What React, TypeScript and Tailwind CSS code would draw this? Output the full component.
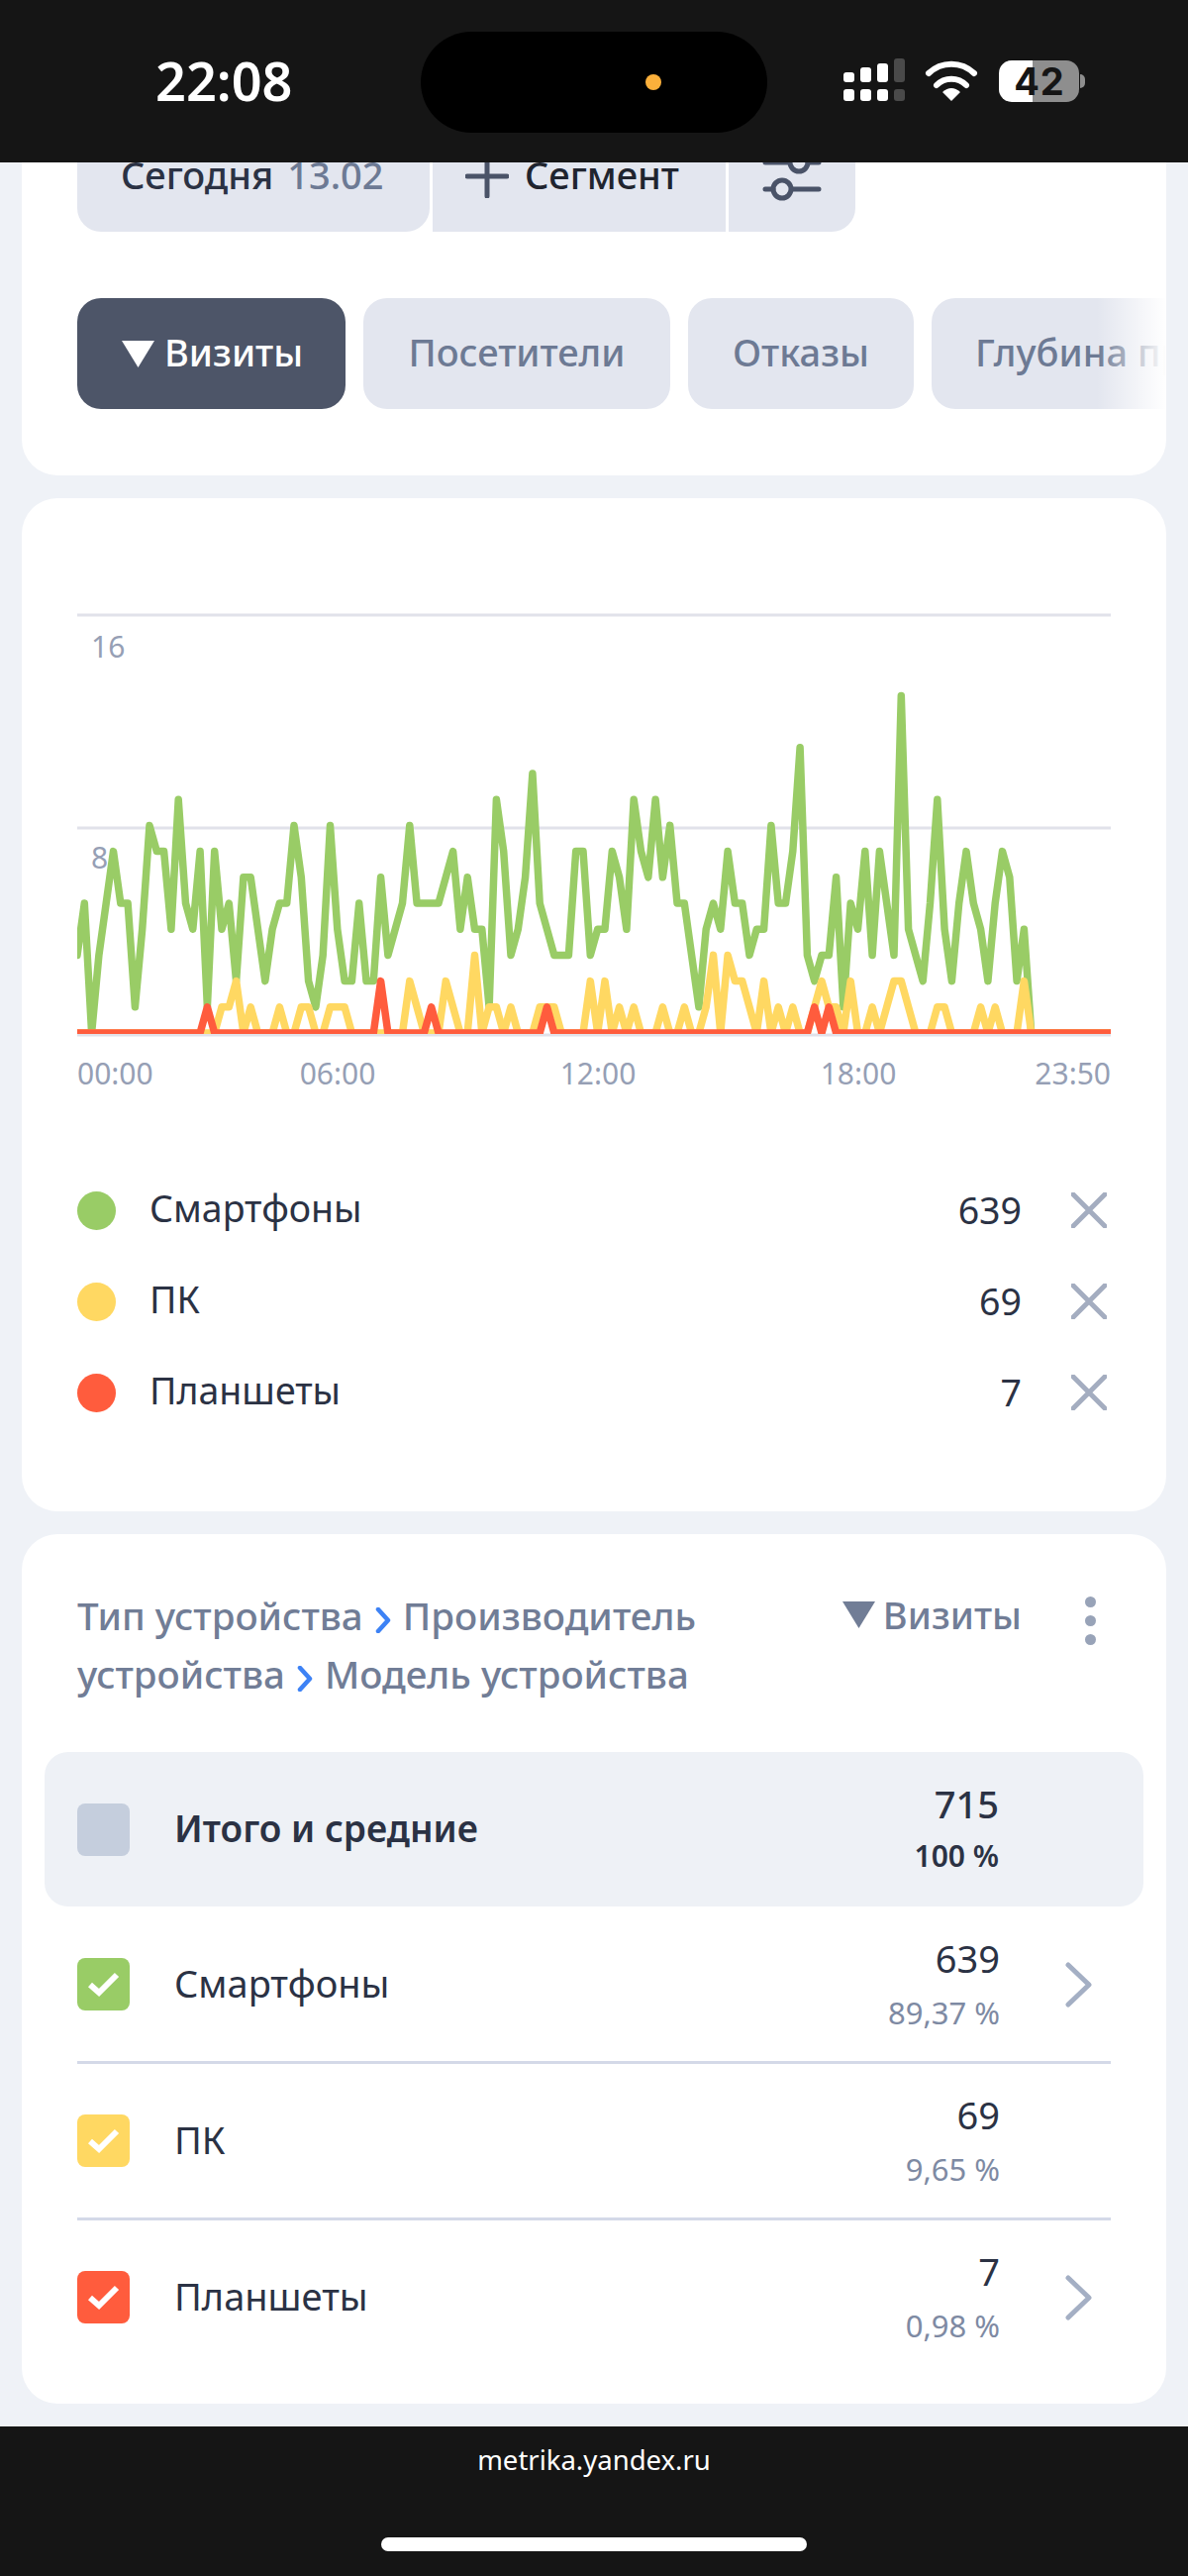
const green = [3,5,0,3,5,7,5,5,1,4,8,7,7,4,9,5,4,7,1,7,4,5,2,6,6,4,2,4,5,5,8,6,2,1,3,8,4,2,2,5,2,2,6,3,4,5,8,5,5,5,5,6,7,4,6,4,4,1,9,7,3,4,6,10,5,4,3,3,3,7,7,3,4,4,7,6,4,9,7,6,9,6,8,5,5,3,1,4,5,4,7,5,5,3,4,4,8,5,5,7,11,3,2,3,3,6,1,5,4,7,3,7,5,3,13,4,3,2,5,9,4,2,5,7,5,4,2,5,7,6,2,4,0];
const yellowPeaks: Record<number, number> = {20:1,21:1,22:2,24:1,28:1,31:1,32:1,35:1,36:1,37:1,46:2,47:1,51:2,52:1,55:3,57:1,58:1,60:1,64:1,65:1,66:1,71:2,73:2,75:1,77:1,81:1,84:1,87:1,88:3,90:3,91:2,92:2,93:1,95:2,97:1,99:1,102:1,103:2,104:1,105:1,107:2,110:1,112:1,113:2,114:2,115:1,119:1,120:1,125:1,127:1,131:2};
const redPeaks: Record<number, number> = {18:1,42:2,49:1,65:1,102:1,104:1};

const POINTS = 144;
const STEP = 1044 / 143;
const ZERO = 440;
const UNIT = 26.2;

function toPoints(value: (i: number) => number) {
  const out: string[] = [];
  for (let i = 0; i < POINTS; i++) {
    out.push(`${(i * STEP).toFixed(1)},${(ZERO - value(i) * UNIT).toFixed(1)}`);
  }
  return out.join(" ");
}

function Chart() {
  const labels = [
    { t: "06:00", x: 263 },
    { t: "12:00", x: 526 },
    { t: "18:00", x: 789 },
  ];
  return (
    <svg width="1044" height="507" viewBox="0 0 1044 507" className="block overflow-hidden">
      <defs>
        <clipPath id="plot">
          <rect x="0" y="0" width="1044" height="441" />
        </clipPath>
      </defs>
      <g stroke="#e1e2ea" strokeWidth="3">
        <line x1="0" x2="1044" y1="18" y2="18" />
        <line x1="0" x2="1044" y1="233" y2="233" />
        <line x1="0" x2="1044" y1="442" y2="442" />
      </g>
      <g fill="#969fb5" fontSize="30" fontFamily="'Noto Sans', sans-serif">
        <text x="14" y="61">16</text>
        <text x="14" y="274">8</text>
        <text x="0" y="492">00:00</text>
        {labels.map((l) => (
          <text key={l.t} x={l.x} y="492" textAnchor="middle">{l.t}</text>
        ))}
        <text x="1044" y="492" textAnchor="end">23:50</text>
      </g>
      <g clipPath="url(#plot)" fill="none" strokeWidth="7.5" strokeLinejoin="round" strokeLinecap="round">
        <polyline stroke="#99cc66" points={toPoints((i) => green[i] ?? 0)} />
        <polyline stroke="#ffd862" points={toPoints((i) => yellowPeaks[i] ?? 0)} />
        <polyline stroke="#ff5c3d" points={toPoints((i) => redPeaks[i] ?? 0)} />
      </g>
    </svg>
  );
}

function StatusBar() {
  const bars = [
    { top: "h-[10px]", color: "bg-white" },
    { top: "h-[15px]", color: "bg-white" },
    { top: "h-[19px]", color: "bg-white" },
    { top: "h-[24px]", color: "bg-[#4a4a4a]" },
  ];
  return (
    <div className="relative h-[164px] shrink-0 bg-[#151515] z-10 flex items-center">
      <div className="w-[425px] pl-[157px] text-[54px] leading-none font-semibold text-white mt-[-2px]">22:08</div>
      <div className="w-[350px] h-[102px] rounded-full bg-black flex items-center justify-end pr-[107px] mt-[2px]">
        <div className="w-4 h-4 rounded-full bg-[#fbb03b]" />
      </div>
      <div className="flex gap-[6px] ml-[77px] mt-[-4px]">
        {bars.map((b, i) => (
          <div key={i} className="w-[11px] flex flex-col gap-[7px] h-[43px] justify-end">
            <div className={`${b.color} rounded-[3px] ${b.top}`} />
            <div className={`${b.color} rounded-[3px] h-[12px]`} />
          </div>
        ))}
      </div>
      <svg width="54" height="42" viewBox="0 0 54 42" className="ml-[20px] mt-[-1px]">
        <path d="M4 13A33 33 0 0 1 50 13" fill="none" stroke="#fff" strokeWidth="6" strokeLinecap="round" />
        <path d="M12 25A21 21 0 0 1 42 25" fill="none" stroke="#fff" strokeWidth="6" strokeLinecap="round" />
        <path d="M18 32Q27 24 36 32L27 41Z" fill="#fff" />
      </svg>
      <div className="ml-[21px] w-[81px] h-[42px] rounded-[13px] bg-[linear-gradient(90deg,#fff_42%,#8e8e8e_42%)] flex items-center justify-center mt-[-1px] pl-[1px] text-[38px] font-bold text-[#151515] font-['Inter',sans-serif] tracking-[1px] leading-none">42</div>
      <div className="w-[5px] h-[14px] ml-[1px] rounded-r-full bg-[#8e8e8e] mt-[-1px]" />
    </div>
  );
}

function Triangle({ color }: { color: string }) {
  return (
    <svg width="33" height="27" viewBox="0 0 33 27" className="shrink-0">
      <path d="M0 0H33L16.5 27Z" fill={color} />
    </svg>
  );
}

function FilterBar() {
  return (
    <div className="flex gap-[3px] w-[786px] h-[112px] -mt-[42px] text-[38px] font-medium">
      <div className="w-[356px] bg-[#e3e6ef] rounded-b-[24px] flex items-center pl-[44px] gap-[14px]">
        <span className="text-[#2b3244] mb-[4px]">Сегодня</span>
        <span className="text-[#6d7a94] mb-[4px]">13.02</span>
      </div>
      <div className="w-[296px] bg-[#e3e6ef] flex items-center pl-[33px] gap-[16px]">
        <svg width="44" height="44" viewBox="0 0 44 44" fill="none" stroke="#4a5368" strokeWidth="5" strokeLinecap="round">
          <path d="M2 22H42M22 2V42" />
        </svg>
        <span className="text-[#20242f] mb-[4px]">Сегмент</span>
      </div>
      <div className="flex-1 bg-[#e3e6ef] rounded-br-[24px] flex items-center justify-center">
        <svg width="60" height="52" viewBox="0 0 60 52" fill="none" stroke="#4a5368" strokeWidth="5" strokeLinecap="round">
          <path d="M3 12H27M46 12H57M3 39H11M30 39H57" />
          <circle cx="37" cy="12" r="9" />
          <circle cx="20" cy="39" r="9" />
        </svg>
      </div>
    </div>
  );
}

function Tabs() {
  return (
    <div className="relative mt-[67px] -mr-[55px] overflow-hidden">
      <div className="flex gap-[18px] h-[112px] text-[38px] font-medium text-[#6d7a94] whitespace-nowrap">
        <div className="w-[271px] shrink-0 rounded-[24px] bg-[#4d5568] text-white flex items-center pl-[45px] gap-[10px]">
          <Triangle color="#fff" />
          <span className="mb-[3px]">Визиты</span>
        </div>
        <div className="w-[310px] shrink-0 rounded-[24px] bg-[#e3e6ef] flex items-center justify-center pb-[3px]">Посетители</div>
        <div className="w-[228px] shrink-0 rounded-[24px] bg-[#e3e6ef] flex items-center justify-center pb-[3px]">Отказы</div>
        <div className="w-[420px] shrink-0 rounded-[24px] bg-[#e3e6ef] flex items-center pl-[44px] pb-[3px]">Глубина просмотра</div>
      </div>
      <div className="absolute top-0 bottom-0 right-0 w-[70px] bg-linear-to-r from-transparent to-white" />
    </div>
  );
}

function LegendRow({ color, label, value }: { color: string; label: string; value: number }) {
  return (
    <div className="h-[92px] flex items-center text-[37.5px] text-[#2b3244]">
      <div className={`w-[39px] h-[39px] rounded-full ${color}`} />
      <div className="ml-[34px] flex-1 mb-[3px]">{label}</div>
      <div>{value}</div>
      <svg width="36" height="36" viewBox="0 0 36 36" className="ml-[50px] mr-[4px]" stroke="#a4adc0" strokeWidth="5" strokeLinecap="round">
        <path d="M2 2L34 34M34 2L2 34" />
      </svg>
    </div>
  );
}

function Crumb() {
  return (
    <svg width="16" height="26" viewBox="0 0 16 26" className="inline-block mx-[12px] align-[-3px]" fill="none" stroke="#3d82f5" strokeWidth="4.5" strokeLinecap="round" strokeLinejoin="round">
      <path d="M3 2L13 13L3 24" />
    </svg>
  );
}

function CheckBox({ color }: { color: string }) {
  return (
    <div className={`w-[53px] h-[53px] shrink-0 rounded-[8px] flex items-center justify-center ${color}`}>
      <svg width="32" height="26" viewBox="0 0 32 26" fill="none" stroke="#fff" strokeWidth="6">
        <path d="M2 13L11 21L29 3" />
      </svg>
    </div>
  );
}

function DeviceRow(props: { color: string; label: string; value: number; pct: string; chevron: boolean; last?: boolean }) {
  return (
    <div className={`h-[158px] flex items-center border-b-[3px] ${props.last ? "border-transparent" : "border-[#d4d9e8]"}`}>
      <CheckBox color={props.color} />
      <div className="ml-[45px] flex-1 text-[38px] text-[#2b3244] mb-[3px]">{props.label}</div>
      <div className="text-right pt-[1px]">
        <div className="text-[38px] leading-[52px] text-[#2b3244]">{props.value}</div>
        <div className="text-[31px] leading-[52px] mt-[3px] text-[#7e8aa3]">{props.pct}</div>
      </div>
      <div className="w-[112px] flex justify-end pr-[18px]">
        {props.chevron && (
          <svg width="28" height="46" viewBox="0 0 28 46" fill="none" stroke="#a4afc4" strokeWidth="5" strokeLinecap="round" strokeLinejoin="round">
            <path d="M3 3L24 23L3 43" />
          </svg>
        )}
      </div>
    </div>
  );
}

export default function App() {
  return (
    <div className="w-[1200px] h-[2601px] flex flex-col bg-[#eff2f7] font-['Noto_Sans',sans-serif] overflow-hidden">
      <StatusBar />
      <main className="flex-1 overflow-hidden px-[22px] flex flex-col gap-[23px]">
        <section className="bg-white rounded-b-[36px] pl-[56px] pr-[55px] pb-[67px]">
          <FilterBar />
          <Tabs />
        </section>

        <section className="bg-white rounded-[36px] px-[56px] pt-[100px] pb-[74px]">
          <Chart />
          <div className="mt-[66px]">
            <LegendRow color="bg-[#99cc66]" label="Смартфоны" value={639} />
            <LegendRow color="bg-[#ffd862]" label="ПК" value={69} />
            <LegendRow color="bg-[#ff5c3d]" label="Планшеты" value={7} />
          </div>
        </section>

        <section className="bg-white rounded-[36px] pt-[53px] pb-[27px]">
          <div className="flex items-start px-[56px]">
            <div className="w-[740px] text-[38.5px] leading-[59px] font-medium text-[#717d96]">
              Тип устройства<Crumb />Производитель устройства<Crumb />Модель устройства
            </div>
            <div className="ml-auto mt-[2px] flex items-center gap-[8px] text-[38px] leading-[52px] font-medium text-[#717d96]">
              <Triangle color="#717d96" />
              <span>Визиты</span>
            </div>
            <div className="w-[90px] flex flex-col items-end pr-[15px] pt-[10px] gap-[8px]">
              <div className="w-[11px] h-[11px] rounded-full bg-[#98a3b8]" />
              <div className="w-[11px] h-[11px] rounded-full bg-[#98a3b8]" />
              <div className="w-[11px] h-[11px] rounded-full bg-[#98a3b8]" />
            </div>
          </div>
          <div className="mt-[49px] mx-[23px] h-[156px] rounded-[24px] bg-[#eef1f6] flex items-center pl-[33px] pr-[146px]">
            <div className="w-[53px] h-[53px] rounded-[8px] bg-[#c5cedd]" />
            <div className="ml-[45px] flex-1 text-[37px] font-semibold text-[#2b3244] mb-[3px]">Итого и средние</div>
            <div className="text-right text-[#2b3244]">
              <div className="text-[38px] leading-[52px] font-medium">715</div>
              <div className="text-[30px] leading-[52px] mt-[1px] font-semibold">100 %</div>
            </div>
          </div>
          <div className="mx-[56px] mt-[1px]">
            <DeviceRow color="bg-[#99cc66]" label="Смартфоны" value={639} pct="89,37 %" chevron />
            <DeviceRow color="bg-[#ffd862]" label="ПК" value={69} pct="9,65 %" chevron={false} />
            <DeviceRow color="bg-[#ff5c3d]" label="Планшеты" value={7} pct="0,98 %" chevron last />
          </div>
        </section>
      </main>
      <footer className="h-[151px] shrink-0 bg-[#151515] flex flex-col items-center">
        <div className="mt-[16px] text-[27.5px] leading-[36px] text-white">metrika.yandex.ru</div>
        <div className="mt-[60px] w-[430px] h-[14px] rounded-full bg-white" />
      </footer>
    </div>
  );
}
